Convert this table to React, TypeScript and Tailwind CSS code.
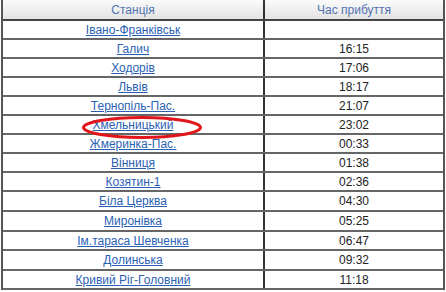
import React from "react";

const rows: { name: string; time: string; h: string }[] = [
  { name: "Івано-Франківськ", time: "", h: "h-[19px]" },
  { name: "Галич", time: "16:15", h: "h-[19px]" },
  { name: "Ходорів", time: "17:06", h: "h-[19px]" },
  { name: "Львів", time: "18:17", h: "h-[19px]" },
  { name: "Тернопіль-Пас.", time: "21:07", h: "h-[19px]" },
  { name: "Хмельницький", time: "23:02", h: "h-[19px]" },
  { name: "Жмеринка-Пас.", time: "00:33", h: "h-[19px]" },
  { name: "Вінниця", time: "01:38", h: "h-[19px]" },
  { name: "Козятин-1", time: "02:36", h: "h-[19px]" },
  { name: "Біла Церква", time: "04:30", h: "h-[20px]" },
  { name: "Миронівка", time: "05:25", h: "h-[20px]" },
  { name: "Ім.тараса Шевченка", time: "06:47", h: "h-[19px]" },
  { name: "Долинська", time: "09:32", h: "h-[20px]" },
  { name: "Кривий Ріг-Головний", time: "11:18", h: "h-[19px]" },
];

export default function App() {
  return (
    <div className="w-[446px] h-[292px] bg-white overflow-hidden relative font-['Liberation_Sans',Arial,sans-serif] text-[12px]">
      <div className="ml-[1px] w-[444px] border-l-2 border-r-2 border-[#555]">
        <div className="flex h-[21px] border-b-2 border-[#444] bg-gradient-to-b from-[#fbfbfb] to-[#e3e3e3] text-[#5373b0]">
          <div className="w-[262px] border-r-2 border-[#333] flex items-center justify-center">
            Станція
          </div>
          <div className="flex-1 flex items-center justify-center">Час прибуття</div>
        </div>
        {rows.map((r) => (
          <div key={r.name} className={`flex ${r.h} border-b-2 border-[#666]`}>
            <div className="w-[262px] border-r-2 border-[#333] flex items-center justify-center">
              <a href="#" className="text-[#2b5fb4] underline leading-none">
                {r.name}
              </a>
            </div>
            <div className="flex-1 flex items-center justify-center text-[#222]">{r.time}</div>
          </div>
        ))}
      </div>
      <svg className="absolute left-[81px] top-[115px]" width="122" height="25" viewBox="0 0 122 25">
        <ellipse cx="61" cy="12.5" rx="58.5" ry="10" fill="none" stroke="#e0161b" strokeWidth="3" />
      </svg>
    </div>
  );
}
